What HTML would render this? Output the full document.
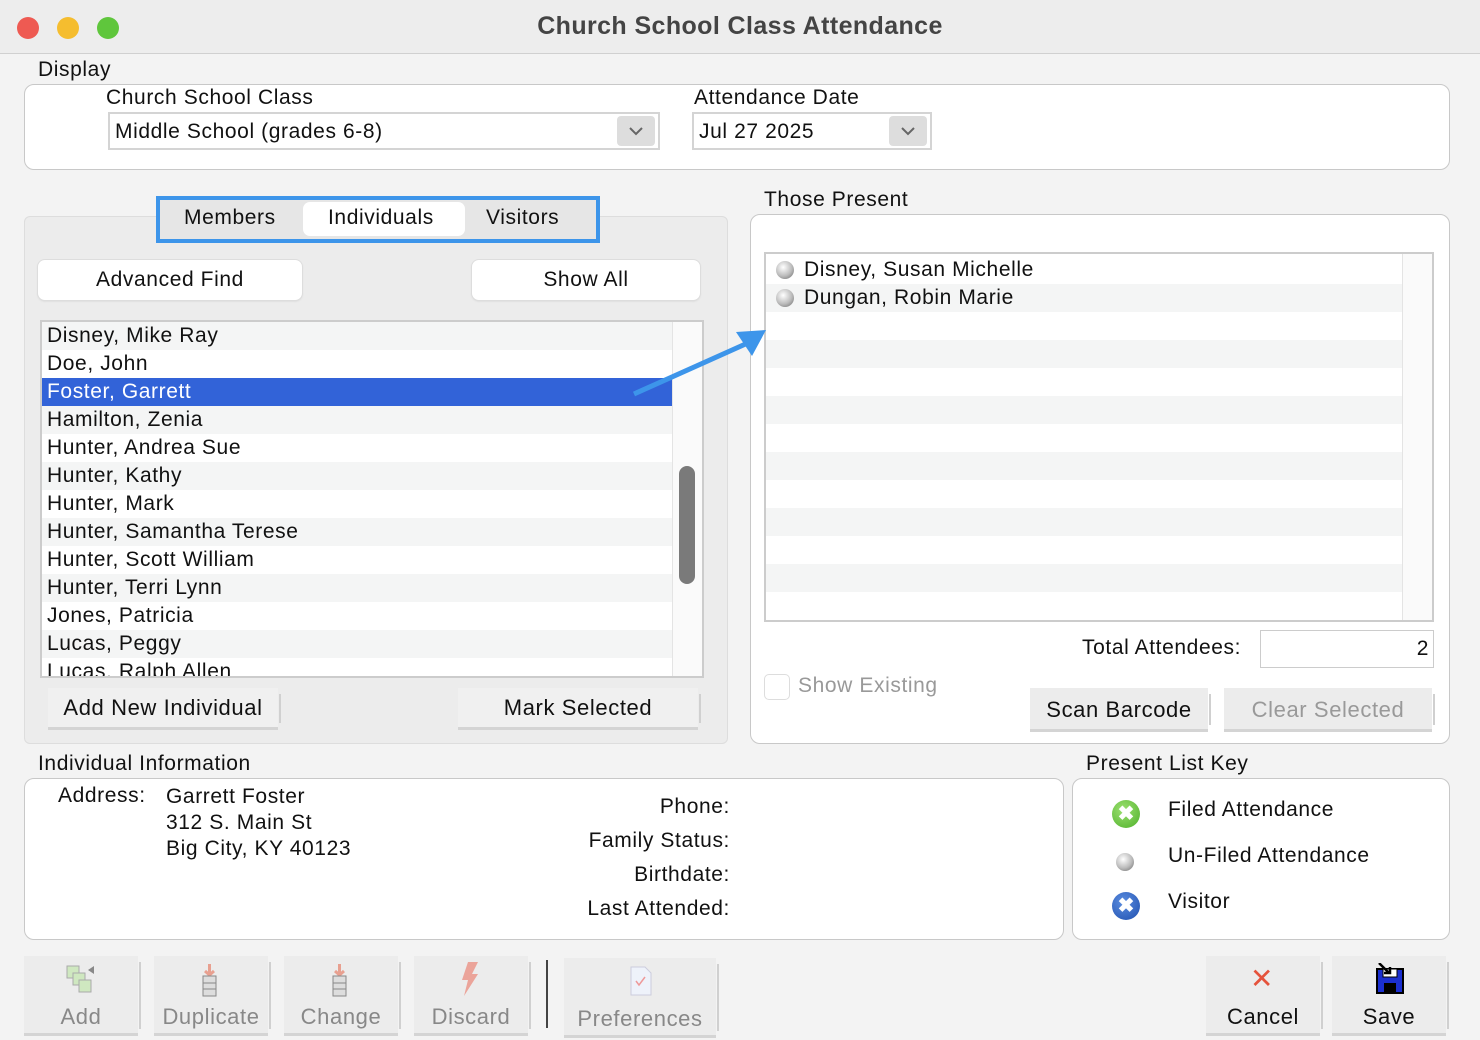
<!DOCTYPE html>
<html><head><style>
*{box-sizing:border-box;margin:0;padding:0}
body{width:1480px;height:1040px;background:#f3f3f3;font-family:"Liberation Sans",sans-serif;color:#111;position:relative;overflow:hidden;font-size:21px;letter-spacing:0.6px}
.a{position:absolute;white-space:nowrap}
.box{position:absolute;background:#fff;border:1px solid #c8c8c8;border-radius:10px}
.btn{position:absolute;background:#fff;border-radius:7px;box-shadow:0 0 0 1px #ddd,0 1px 2px #ccc;text-align:center;line-height:40px}
.tb{position:absolute;background:#ececec;border-bottom:3px solid #d4d4d4;text-align:center;color:#888;font-size:22px}
.tb:after{content:"";position:absolute;right:-3px;top:6px;bottom:4px;width:2px;background:#d0d0d0}
.row{position:absolute;left:0;right:0;height:28px;line-height:28px;padding-left:5px}
.ball{display:inline-block;width:18px;height:18px;border-radius:50%;background:radial-gradient(circle at 40% 35%,#fff,#bbb 55%,#666);vertical-align:middle;margin-right:10px}
.chev{position:absolute;background:#ddd;border-radius:4px}
</style></head><body>
<div class="a" style="left:0;top:0;width:1480px;height:54px;background:#ededed;border-bottom:1px solid #d0d0d0"></div>
<div class="a" style="left:17px;top:17px;width:22px;height:22px;border-radius:50%;background:#ee5a52"></div>
<div class="a" style="left:57px;top:17px;width:22px;height:22px;border-radius:50%;background:#f5bd2f"></div>
<div class="a" style="left:97px;top:17px;width:22px;height:22px;border-radius:50%;background:#5fc63c"></div>
<div class="a" style="left:0;width:1480px;top:12px;text-align:center;font-weight:bold;font-size:25px;color:#444;letter-spacing:0.4px">Church School Class Attendance</div>

<div class="a" style="left:38px;top:58px">Display</div>
<div class="box" style="left:24px;top:84px;width:1426px;height:86px"></div>
<div class="a" style="left:106px;top:86px">Church School Class</div>
<div class="a" style="left:108px;top:112px;width:552px;height:38px;border:2px solid #d4d4d4;background:#fff;padding:6px 5px">Middle School (grades 6-8)</div>
<div class="chev" style="left:617px;top:116px;width:38px;height:30px"><svg width="38" height="30"><path d="M13 12l6 6 6-6" stroke="#666" stroke-width="2" fill="none"/></svg></div>
<div class="a" style="left:694px;top:86px">Attendance Date</div>
<div class="a" style="left:692px;top:112px;width:240px;height:38px;border:2px solid #d4d4d4;background:#fff;padding:6px 5px">Jul 27 2025</div>
<div class="chev" style="left:889px;top:116px;width:38px;height:30px"><svg width="38" height="30"><path d="M13 12l6 6 6-6" stroke="#666" stroke-width="2" fill="none"/></svg></div>

<div class="a" style="left:24px;top:216px;width:704px;height:528px;background:#ececec;border:1px solid #ddd;border-radius:6px"></div>
<div class="a" style="left:156px;top:196px;width:444px;height:47px;border:4px solid #3d95ea;background:#e6e6e6"></div>
<div class="a" style="left:303px;top:202px;width:162px;height:34px;background:#fff;border-radius:7px"></div>
<div class="a" style="left:184px;top:206px">Members</div>
<div class="a" style="left:328px;top:206px">Individuals</div>
<div class="a" style="left:486px;top:206px">Visitors</div>
<div class="btn" style="left:38px;top:260px;width:264px">Advanced Find</div>
<div class="btn" style="left:472px;top:260px;width:228px">Show All</div>

<div class="a" style="left:40px;top:320px;width:664px;height:358px;border:2px solid #ccc;background:#fff;overflow:hidden">
<div class="row" style="top:0;background:#f4f5f5">Disney, Mike Ray</div>
<div class="row" style="top:28px">Doe, John</div>
<div class="row" style="top:56px;background:#3263d8;color:#fff;right:30px">Foster, Garrett</div>
<div class="row" style="top:84px;background:#f4f5f5">Hamilton, Zenia</div>
<div class="row" style="top:112px">Hunter, Andrea Sue</div>
<div class="row" style="top:140px;background:#f4f5f5">Hunter, Kathy</div>
<div class="row" style="top:168px">Hunter, Mark</div>
<div class="row" style="top:196px;background:#f4f5f5">Hunter, Samantha Terese</div>
<div class="row" style="top:224px">Hunter, Scott William</div>
<div class="row" style="top:252px;background:#f4f5f5">Hunter, Terri Lynn</div>
<div class="row" style="top:280px">Jones, Patricia</div>
<div class="row" style="top:308px;background:#f4f5f5">Lucas, Peggy</div>
<div class="row" style="top:336px">Lucas, Ralph Allen</div>
<div class="a" style="right:0;top:0;width:30px;height:356px;background:#fafafa;border-left:1px solid #e4e4e4"></div>
<div class="a" style="right:7px;top:144px;width:16px;height:118px;border-radius:8px;background:#7a7a7a"></div>
</div>
<div class="tb" style="left:48px;top:688px;width:230px;height:42px;line-height:40px;color:#111;background:#f0f0f0">Add New Individual</div>
<div class="tb" style="left:458px;top:688px;width:240px;height:42px;line-height:40px;color:#111;background:#f0f0f0">Mark Selected</div>

<div class="a" style="left:764px;top:188px">Those Present</div>
<div class="box" style="left:750px;top:214px;width:700px;height:530px"></div>
<div class="a" style="left:764px;top:252px;width:670px;height:370px;border:2px solid #ccc;background:#fff;overflow:hidden">
<div class="row" style="top:2px;padding-left:10px"><span class="ball"></span>Disney, Susan Michelle</div>
<div class="row" style="top:30px;background:#f4f5f5;padding-left:10px"><span class="ball"></span>Dungan, Robin Marie</div>
<div class="row" style="top:86px;background:#f4f5f5"></div>
<div class="row" style="top:142px;background:#f4f5f5"></div>
<div class="row" style="top:198px;background:#f4f5f5"></div>
<div class="row" style="top:254px;background:#f4f5f5"></div>
<div class="row" style="top:310px;background:#f4f5f5"></div>
<div class="a" style="right:0;top:0;width:30px;height:368px;background:#fafafa;border-left:1px solid #e4e4e4"></div>
</div>
<svg class="a" style="left:630px;top:326px" width="140" height="74"><line x1="4" y1="68" x2="120" y2="16" stroke="#3d95ea" stroke-width="5"/><polygon points="136,4 106,6 122,30" fill="#3d95ea"/></svg>
<div class="a" style="left:1082px;top:636px">Total Attendees:</div>
<div class="a" style="left:1260px;top:630px;width:174px;height:38px;border:1px solid #ccc;background:#fff;text-align:right;padding:6px 4px">2</div>
<div class="a" style="left:764px;top:674px;width:26px;height:26px;border:1px solid #ddd;border-radius:5px;background:#fff"></div>
<div class="a" style="left:798px;top:674px;color:#999">Show Existing</div>
<div class="tb" style="left:1030px;top:688px;width:178px;height:44px;line-height:44px;color:#111">Scan Barcode</div>
<div class="tb" style="left:1224px;top:688px;width:208px;height:44px;line-height:44px;color:#999">Clear Selected</div>

<div class="a" style="left:38px;top:752px">Individual Information</div>
<div class="box" style="left:24px;top:778px;width:1040px;height:162px"></div>
<div class="a" style="left:58px;top:784px">Address:</div>
<div class="a" style="left:166px;top:784px;line-height:26px">Garrett Foster<br>312 S. Main St<br>Big City, KY 40123</div>
<div class="a" style="left:430px;width:300px;text-align:right;top:790px;line-height:34px">Phone:<br>Family Status:<br>Birthdate:<br>Last Attended:</div>

<div class="a" style="left:1086px;top:752px">Present List Key</div>
<div class="box" style="left:1072px;top:778px;width:378px;height:162px"></div>
<div class="a" style="left:1112px;top:800px;width:28px;height:28px;border-radius:50%;background:radial-gradient(circle at 40% 35%,#9be070,#4fb02a);color:#fff;text-align:center;font-weight:bold;font-size:20px;line-height:28px;letter-spacing:0">&#10006;</div>
<div class="a" style="left:1168px;top:798px">Filed Attendance</div>
<div class="a" style="left:1116px;top:850px"><span class="ball"></span></div>
<div class="a" style="left:1168px;top:844px">Un-Filed Attendance</div>
<div class="a" style="left:1112px;top:892px;width:28px;height:28px;border-radius:50%;background:radial-gradient(circle at 40% 35%,#5b8de0,#1f4fae);color:#fff;text-align:center;font-weight:bold;font-size:20px;line-height:28px;letter-spacing:0">&#10006;</div>
<div class="a" style="left:1168px;top:890px">Visitor</div>

<div class="tb" style="left:24px;top:956px;width:114px;height:80px;padding-top:48px">Add</div>
<svg class="a" style="left:66px;top:964px" width="30" height="32"><rect x="1" y="2" width="12" height="12" fill="#cfe8c0" stroke="#aaa"/><rect x="7" y="9" width="12" height="12" fill="#cfe8c0" stroke="#aaa"/><rect x="13" y="16" width="12" height="12" fill="#cfe8c0" stroke="#aaa"/><polygon points="22,6 28,2 28,10" fill="#888"/></svg>
<div class="tb" style="left:154px;top:956px;width:114px;height:80px;padding-top:48px">Duplicate</div>
<div class="tb" style="left:284px;top:956px;width:114px;height:80px;padding-top:48px">Change</div>
<svg class="a" style="left:200px;top:964px" width="20" height="34"><path d="M9.5 0v10M5 7l4.5 4 4.5-4" stroke="#e8a090" stroke-width="3" fill="none"/><rect x="3" y="12" width="13" height="20" fill="#ddd" stroke="#888"/><line x1="3" y1="19" x2="16" y2="19" stroke="#888"/><line x1="3" y1="25" x2="16" y2="25" stroke="#888"/></svg>
<svg class="a" style="left:330px;top:964px" width="20" height="34"><path d="M9.5 0v10M5 7l4.5 4 4.5-4" stroke="#e8a090" stroke-width="3" fill="none"/><rect x="3" y="12" width="13" height="20" fill="#ddd" stroke="#888"/><line x1="3" y1="19" x2="16" y2="19" stroke="#888"/><line x1="3" y1="25" x2="16" y2="25" stroke="#888"/></svg>
<div class="tb" style="left:414px;top:956px;width:114px;height:80px;padding-top:48px">Discard</div>
<svg class="a" style="left:458px;top:962px" width="24" height="36"><polygon points="10,0 20,0 14,12 20,12 6,34 10,18 4,18" fill="#eba49a"/></svg>
<div class="a" style="left:546px;top:960px;width:2px;height:68px;background:#444"></div>
<div class="tb" style="left:564px;top:958px;width:152px;height:80px;padding-top:48px">Preferences</div>
<svg class="a" style="left:630px;top:966px" width="22" height="30"><path d="M1 1h14l6 6v22H1z" fill="#eef2fa" stroke="#ccd"/><path d="M6 15l3 4 6-8" stroke="#e99" fill="none" stroke-width="1.5"/></svg>
<div class="tb" style="left:1206px;top:956px;width:114px;height:80px;padding-top:48px;color:#111">Cancel</div>
<div class="a" style="left:1250px;top:962px;color:#e5533c;font-size:28px">&#10005;</div>
<div class="tb" style="left:1332px;top:956px;width:114px;height:80px;padding-top:48px;color:#111">Save</div>
<svg class="a" style="left:1375px;top:963px" width="30" height="32"><rect x="2" y="6" width="26" height="24" fill="#1b2fd0" stroke="#000" stroke-width="2"/><rect x="8" y="6" width="14" height="8" fill="#fff" stroke="#000"/><rect x="9" y="20" width="12" height="10" fill="#000"/><path d="M4 0l10 10M9 10h6V4" stroke="#000" stroke-width="2.5" fill="none"/></svg>
</body></html>
